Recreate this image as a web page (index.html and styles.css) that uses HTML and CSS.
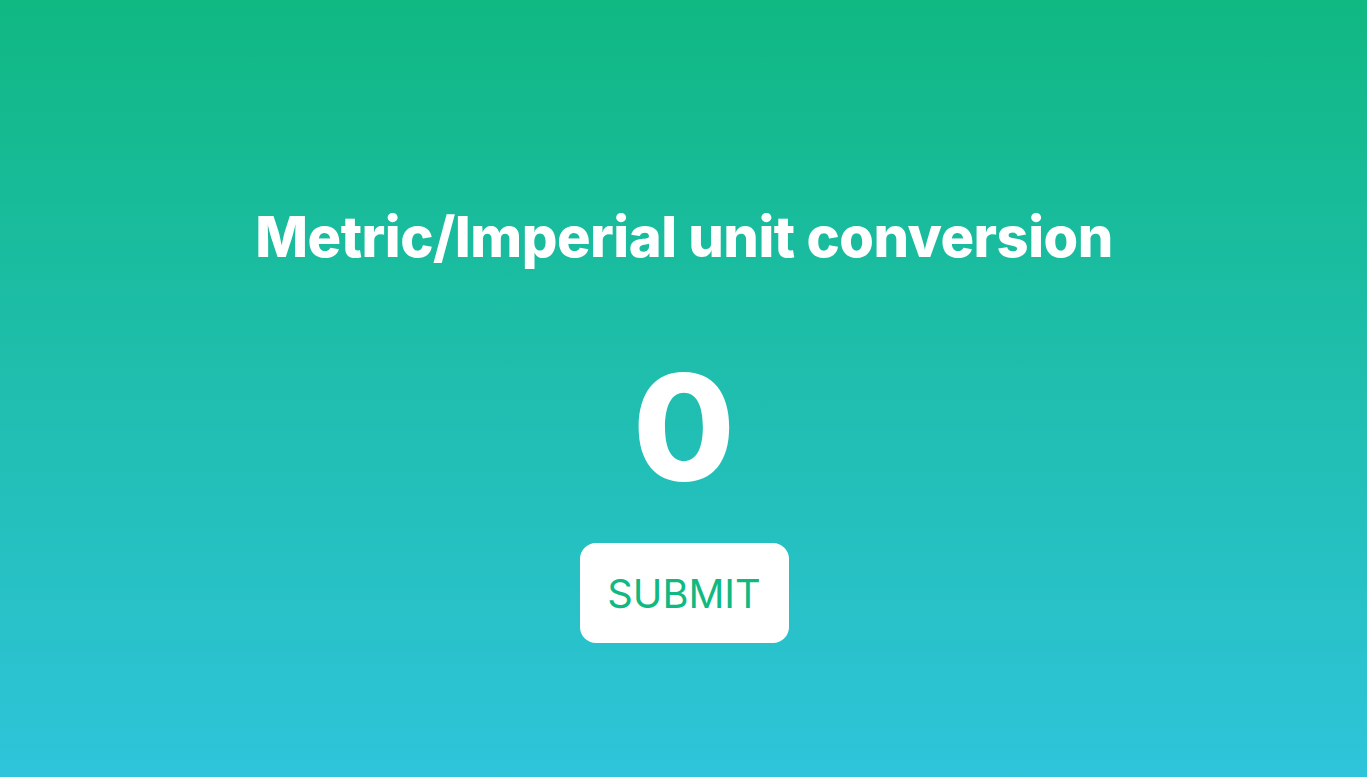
FILE: index.html
```html
<!DOCTYPE html>
<html lang="en">
<head>
<meta charset="utf-8">
<title>Metric/Imperial unit conversion</title>
<link rel="stylesheet" href="styles.css">
</head>
<body>
<main class="app">
  <h1 class="title">Metric/Imperial unit conversion</h1>
  <div class="value">0</div>
  <button class="submit" type="button">SUBMIT</button>
</main>
</body>
</html>
```
FILE: styles.css
```css
html, body {
  margin: 0;
  padding: 0;
  height: 100%;
}
body {
  font-family: Inter, "Noto Sans", sans-serif;
  background: linear-gradient(180deg, #10b882 0%, #2ec4db 100%);
  color: #fff;
}
.app {
  box-sizing: border-box;
  height: 100%;
  display: flex;
  flex-direction: column;
  align-items: center;
  padding-top: 198px;
  padding-left: 1px;
}
.title {
  margin: 0;
  font-size: 56px;
  font-weight: 800;
  line-height: 78px;
  letter-spacing: -0.5px;
}
.value {
  margin-top: 72px;
  font-size: 148px;
  font-weight: 800;
  line-height: 160px;
}
.submit {
  margin-top: 35px;
  width: 209px;
  height: 100px;
  border: none;
  border-radius: 16px;
  background: #fff;
  color: #10b981;
  font-family: Inter, "Noto Sans", sans-serif;
  font-size: 39.8px;
  font-weight: 400;
  cursor: pointer;
}
```
